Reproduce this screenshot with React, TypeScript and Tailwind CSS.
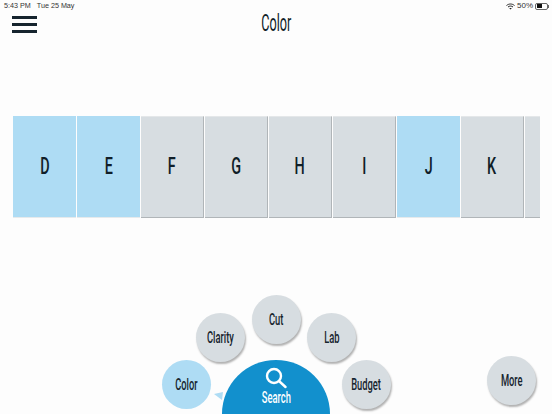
import React from "react";

const GRADES = ["D", "E", "F", "G", "H", "I", "J", "K"];
const SELECTED = ["D", "E", "J"];

const BUBBLES = [
  { label: "Cut", className: "left-[252px] top-[295px]" },
  { label: "Clarity", className: "left-[196px] top-[313px]" },
  { label: "Lab", className: "left-[307px] top-[313px]" },
  { label: "Budget", className: "left-[342px] top-[360px]" },
  { label: "More", className: "left-[487px] top-[356px]" },
];

// nothing condensed is installed, so Roboto gets squeezed
function Narrow({ children, className }: { children: React.ReactNode; className: string }): React.JSX.Element {
  return <span className={`inline-block ${className}`}>{children}</span>;
}

function Bubble({ label, className }: { label: string; className: string }): React.JSX.Element {
  return (
    <button
      type="button"
      className={`absolute flex h-[49px] w-[49px] items-center justify-center rounded-full bg-[#d7dde1] text-[#16242e] shadow-[1px_2px_2px_rgba(0,0,0,0.3)] ${className}`}
    >
      <Narrow className="scale-x-[0.55] text-[17px] font-medium">{label}</Narrow>
    </button>
  );
}

function GradeCard({ grade }: { grade: string }): React.JSX.Element {
  const selected = SELECTED.includes(grade);
  return (
    <div
      className={
        selected
          ? "flex h-[102px] w-[63px] shrink-0 items-center justify-center border-b border-[#e6eaec] bg-[#aedcf4] pb-[2px] text-[#101e28]"
          : "flex h-[102px] w-[63px] shrink-0 items-center justify-center border-t border-r border-b border-t-[#e4e7e9] border-r-[#b0b5b8] border-b-[#b0b5b8] bg-[#d7dde1] pb-[2px] text-[#101e28]"
      }
    >
      <Narrow className="scale-x-[0.6] text-[24px] font-medium">{grade}</Narrow>
    </div>
  );
}

export default function App(): React.JSX.Element {
  return (
    <div className="relative h-[414px] w-[552px] overflow-hidden bg-[#fdfdfd] font-['Roboto',sans-serif]">
      {/* status bar */}
      <div className="flex h-[11px] items-center justify-between pl-[4px] pr-[3px] pt-[1px] font-['Liberation_Sans',sans-serif] text-[7.2px] text-[#333]">
        <div className="flex gap-[6px]">
          <span>5:43 PM</span>
          <span>Tue 25 May</span>
        </div>
        <div className="flex items-center gap-[2px]">
          <svg width="9" height="7" viewBox="0 0 18 14" fill="none" stroke="#222" strokeWidth="2">
            <path d="M1 5c5-4 11-4 16 0M4 8c3-2.500 7-2.500 10 0" />
            <path d="M9 13l-2.500-2.500c1.500-1 3.500-1 5 0z" fill="#222" stroke="none" />
          </svg>
          <span className="text-[8px]">50%</span>
          <div className="flex items-center">
            <div className="flex h-[7px] w-[13px] rounded-[2px] border border-[#666] p-[0.5px]">
              <div className="w-1/2 bg-[#111]" />
            </div>
            <div className="h-[3px] w-[1px] bg-[#666]" />
          </div>
        </div>
      </div>

      {/* header */}
      <div className="relative flex h-[27px] items-center justify-center">
        <div className="absolute left-[12px] top-[5px] flex w-[25px] flex-col gap-[4px]">
          <div className="h-[3px] bg-[#16242e]" />
          <div className="h-[3px] bg-[#16242e]" />
          <div className="h-[3px] bg-[#16242e]" />
        </div>
        <h1 className="text-[#101e28]">
          <Narrow className="scale-x-[0.55] text-[23px]">Color</Narrow>
        </h1>
      </div>

      {/* grades */}
      <div className="ml-[13px] mt-[78px] flex w-[527px] gap-px overflow-hidden">
        {GRADES.map((grade) => (
          <GradeCard key={grade} grade={grade} />
        ))}
        <div className="h-[102px] w-[16px] shrink-0 border-t border-b border-t-[#e4e7e9] border-b-[#b0b5b8] bg-[#d7dde1]" />
      </div>

      {/* radial menu */}
      {BUBBLES.map((bubble) => (
        <Bubble key={bubble.label} label={bubble.label} className={bubble.className} />
      ))}
      <button
        type="button"
        className="absolute left-[162px] top-[360px] flex h-[49px] w-[49px] items-center justify-center rounded-full bg-[#aedcf4] text-[#16242e]"
      >
        <Narrow className="scale-x-[0.55] text-[17px] font-medium">Color</Narrow>
      </button>
      <svg className="absolute left-[213px] top-[392px]" width="10" height="8" viewBox="0 0 10 8">
        <path d="M1 2L10 0L9 8z" fill="#aedcf4" />
      </svg>
      <div className="absolute left-[222px] top-[360px] flex h-[108px] w-[108px] flex-col items-center rounded-full bg-[#1290cd] pt-[7px] text-white">
        <svg width="22" height="22" viewBox="0 0 22 22" fill="none" stroke="white" strokeWidth="2.400" strokeLinecap="round">
          <circle cx="9" cy="9" r="7" />
          <path d="M14.500 14.500L20.500 20" />
        </svg>
        <Narrow className="-mt-[1px] scale-x-[0.55] text-[17px] font-medium leading-[18px]">Search</Narrow>
      </div>
    </div>
  );
}
